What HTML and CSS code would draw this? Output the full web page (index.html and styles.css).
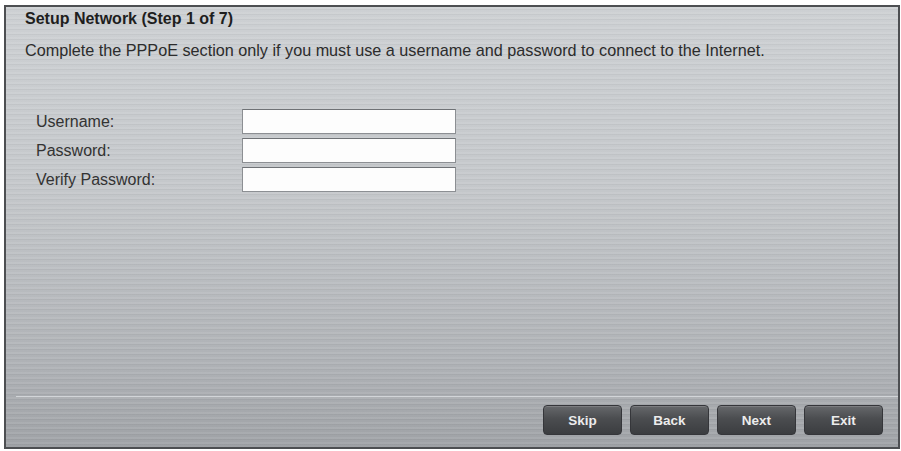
FILE: index.html
```html
<!DOCTYPE html>
<html lang="en">
<head>
  <meta charset="UTF-8">
  <title>Setup Network</title>
  <link rel="stylesheet" href="styles.css">
</head>
<body>

  <div class="wizard-panel">
    <div class="wizard-body">
      <h2 class="wizard-title">Setup Network (Step 1 of 7)</h2>
      <p class="wizard-intro">Complete the PPPoE section only if you must use a username and password to connect to the Internet.</p>

      <form class="pppoe-form" action="javascript:void(0);">
        <label for="username" class="pppoe-label">Username:</label>
        <input type="text" id="username" class="pppoe-input">
        <label for="password" class="pppoe-label">Password:</label>
        <input type="password" id="password" class="pppoe-input">
        <label for="verify" class="pppoe-label">Verify Password:</label>
        <input type="password" id="verify" class="pppoe-input">
      </form>
    </div>

    <!-- wizard navigation -->
    <div class="wizard-footer">
      <button class="wizard-btn">Skip</button>
      <button class="wizard-btn">Back</button>
      <button class="wizard-btn">Next</button>
      <button class="wizard-btn">Exit</button>
    </div>
  </div>

</body>
</html>
```

FILE: styles.css
```css
body {
  margin: 0;
  padding: 0;
  background-color: white;
  font-family: "Liberation Sans", Arial, sans-serif;
}
.wizard-panel {
  margin: 5px 1px 2px 4px;
  height: 440px;
  border: 2px solid #4d4f52;
  display: flex;
  flex-direction: column;
  background-color: #b8bbbf;
  background-image:
    repeating-linear-gradient(to bottom, rgba(255,255,255,0.08) 0px, rgba(255,255,255,0.08) 2px, rgba(0,0,0,0.035) 2px, rgba(0,0,0,0.035) 3px, transparent 3px, transparent 5px),
    linear-gradient(to bottom, #cdd0d3 0%, #c5c8cb 40%, #aeb1b5 82%, #9fa2a6 100%);
}
.wizard-body {
  flex: 1;
  padding: 2px 19px 0 19px;
}
.wizard-title {
  margin: 0;
  font-size: 16px;
  font-weight: bold;
  color: #1e1e1e;
  line-height: 20px;
}
.wizard-intro {
  margin: 11px 0 0 0;
  font-size: 16.2px;
  color: #2c2c2c;
  line-height: 20px;
}
.pppoe-form {
  margin: 49px 0 0 11px;
  display: grid;
  grid-template-columns: 206px 214px;
  row-gap: 4px;
  align-items: center;
}
.pppoe-label {
  font-size: 16px;
  color: #333;
}
.pppoe-input {
  height: 25px;
  margin: 0;
  padding: 0 4px;
  box-sizing: border-box;
  background-color: #fdfdfd;
  border: 1px solid #8c8f93;
  border-top-color: #6f7276;
}
.wizard-footer {
  display: flex;
  justify-content: flex-end;
  gap: 8px;
  padding: 8px 15px 12px 0;
  border-top: 1px solid #d2d5d8;
  margin-left: 10px;
}
.wizard-btn {
  width: 79px;
  height: 30px;
  border: 1px solid #35363a;
  border-radius: 4px;
  background: linear-gradient(to bottom, #66686b 0%, #4b4d50 45%, #3b3d40 100%);
  box-shadow: inset 0 1px 0 rgba(255,255,255,0.15);
  color: #ececec;
  font-family: "Liberation Sans", Arial, sans-serif;
  font-size: 13.5px;
  font-weight: bold;
  cursor: pointer;
}
.wizard-btn:hover {
  background: linear-gradient(to bottom, #7a7c7f 0%, #5a5c5f 100%);
}
```
